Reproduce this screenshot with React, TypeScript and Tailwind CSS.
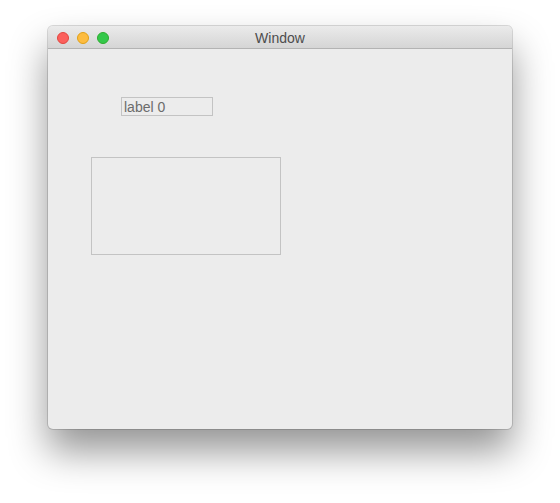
import React from 'react'

export default function App() {
    return (
        <div className="w-[560px] h-[503px] bg-white pt-[26px] pl-[48px] font-['Liberation_Sans',sans-serif]">
            {/* Window */}
            <div className="w-[464px] h-[403px] rounded-[5px] bg-[#ececec] flex flex-col overflow-hidden shadow-[0_22px_38px_rgba(0,0,0,0.42),0_0_0_1px_rgba(0,0,0,0.14)]">
                {/* Title bar */}
                <div className="h-[23px] shrink-0 flex items-center relative bg-gradient-to-b from-[#ebebeb] to-[#d5d5d5] border-b border-[#b3b3b3]">
                    <div className="flex items-center gap-[8px] pl-[9px] pt-[2px]">
                        <span className="w-[12px] h-[12px] rounded-full bg-[#fc605c] border border-[#e2463f]" />
                        <span className="w-[12px] h-[12px] rounded-full bg-[#fdbc40] border border-[#e1a116]" />
                        <span className="w-[12px] h-[12px] rounded-full bg-[#34c84a] border border-[#2dac2f]" />
                    </div>
                    <div className="absolute inset-0 flex items-center justify-center pt-[3px] text-[14px] text-[#4d4d4d] pointer-events-none">
                        Window
                    </div>
                </div>

                {/* Content */}
                <div className="flex-1 flex flex-col items-start">
                    <div className="ml-[73px] mt-[48px] w-[92px] h-[19px] border border-[#c3c3c3] flex items-center pl-[2px] pt-[1px] text-[14px] text-[#6b6b6b] leading-none">
                        label 0
                    </div>
                    <div className="ml-[43px] mt-[41px] w-[190px] h-[98px] border border-[#c3c3c3]" />
                </div>
            </div>
        </div>
    )
}
